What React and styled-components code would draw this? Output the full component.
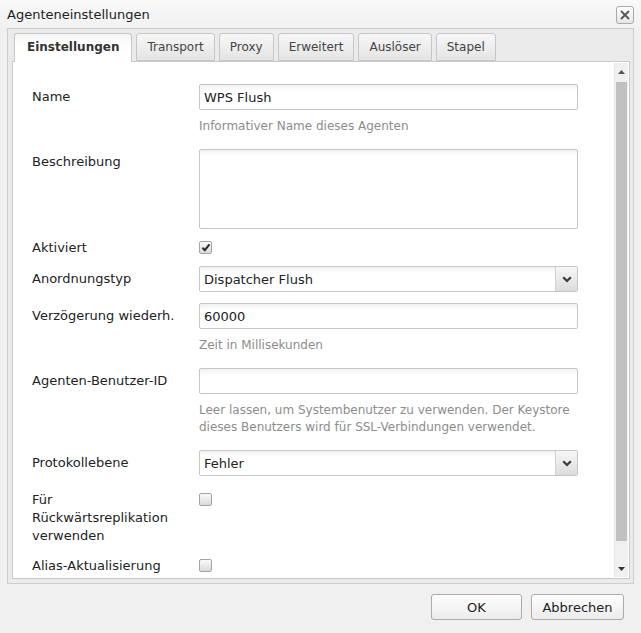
import React from "react";
import styled, { createGlobalStyle } from "styled-components";

const Global = createGlobalStyle`
  html, body { margin: 0; padding: 0; background: #f0f0f0; }
  body { font-family: "DejaVu Sans", Verdana, sans-serif; color: #222; }
  * { box-sizing: border-box; }
`;

const Dialog = styled.div`
  width: 641px;
  height: 633px;
  display: flex;
  flex-direction: column;
  background: #f0f0f0;
  overflow: hidden;
`;

const TitleBar = styled.div`
  height: 28px;
  flex: none;
  display: flex;
  align-items: center;
  justify-content: space-between;
  padding: 0 7px 0 7px;
  background: linear-gradient(#f9f9f9, #f1f1f1);
  font-size: 13px;
  color: #222;
`;

const CloseButton = styled.div`
  width: 18px;
  height: 18px;
  margin-top: 1px;
  border: 1px solid #a9a9a9;
  border-radius: 3px;
  background: linear-gradient(#ffffff, #e6e6e6);
  display: flex;
  align-items: center;
  justify-content: center;
`;

const Frame = styled.div`
  flex: none;
  height: 556px;
  margin: 0 7px;
  display: flex;
  flex-direction: column;
  border: 1px solid #cdcdcd;
  background: #ebebeb;
  padding: 0 3px 4px 4px;
`;

const TabStrip = styled.div`
  height: 32px;
  flex: none;
  display: flex;
  align-items: flex-end;
  gap: 4px;
  padding-left: 2px;
  position: relative;
  z-index: 1;
`;

const Tab = styled.div`
  height: ${(p) => (p.$active ? "29px" : "28px")};
  margin-bottom: ${(p) => (p.$active ? "-1px" : "0")};
  padding: 0 ${(p) => (p.$active ? "12px" : "10px")};
  display: flex;
  align-items: center;
  font-size: 12px;
  font-weight: ${(p) => (p.$active ? "bold" : "normal")};
  color: ${(p) => (p.$active ? "#333" : "#444")};
  border: 1px solid #c6c6c6;
  border-bottom: ${(p) => (p.$active ? "none" : "1px solid #c6c6c6")};
  border-radius: 3px 3px 0 0;
  background: ${(p) =>
    p.$active
      ? "linear-gradient(#f4f4f4, #ffffff 40%)"
      : "linear-gradient(#f7f7f7, #e4e4e4)"};
  padding-bottom: ${(p) => (p.$active ? "2px" : "0")};
`;

const ContentBox = styled.div`
  flex: 1;
  min-height: 0;
  display: flex;
  background: #fff;
  border: 1px solid #c9c9c9;
`;

const Form = styled.div`
  flex: 1;
  min-width: 0;
  padding: 22px 0 0 19px;
  overflow: hidden;
`;

const Row = styled.div`
  display: grid;
  grid-template-columns: 167px 379px;
  margin-top: ${(p) => p.$mt || 0}px;
`;

const Label = styled.div`
  width: 160px;
  padding-top: 4px;
  font-size: 13px;
  line-height: 18px;
  color: #222;
`;

const Field = styled.div`
  display: flex;
  flex-direction: column;
`;

const TextInput = styled.input`
  width: 379px;
  height: 26px;
  margin: 0;
  padding: 0 4px;
  font-family: "DejaVu Sans", Verdana, sans-serif;
  font-size: 13px;
  color: #222;
  border: 1px solid #c6c6c6;
  border-radius: 2px;
  background: linear-gradient(#f1f1f1, #ffffff 6px);
  outline: none;
`;

const TextArea = styled.textarea`
  width: 379px;
  height: 80px;
  margin: 0;
  padding: 3px 4px;
  display: block;
  resize: none;
  font-family: "DejaVu Sans", Verdana, sans-serif;
  font-size: 13px;
  border: 1px solid #c6c6c6;
  border-radius: 2px;
  background: linear-gradient(#f1f1f1, #ffffff 6px);
  outline: none;
`;

const Hint = styled.div`
  margin-top: 8px;
  font-size: 12px;
  line-height: 17px;
  color: #8c8c8c;
`;

const SelectBox = styled.div`
  width: 379px;
  height: 26px;
  display: flex;
  border: 1px solid #c6c6c6;
  border-radius: 2px;
  background: linear-gradient(#f1f1f1, #ffffff 6px);
  overflow: hidden;
`;

const SelectValue = styled.div`
  flex: 1;
  display: flex;
  align-items: center;
  padding: 0 4px;
  font-size: 13px;
  color: #222;
`;

const DropButton = styled.div`
  width: 22px;
  flex: none;
  display: flex;
  align-items: center;
  justify-content: center;
  border-left: 1px solid #d0d0d0;
  background: linear-gradient(#f7f7f7, #dcdcdc);
`;

const CheckBox = styled.div`
  width: 13px;
  height: 13px;
  margin-top: 6px;
  border: 1px solid #a4a4a4;
  border-radius: 2px;
  background: linear-gradient(#fafafa, #dadada);
  display: flex;
  align-items: center;
  justify-content: center;
`;

const ScrollBar = styled.div`
  width: 14px;
  flex: none;
  margin: 1px 1px 1px 0;
  display: flex;
  flex-direction: column;
  background: #f0f0f0;
  border-left: 1px solid #e6e6e6;
`;

const ScrollArrow = styled.div`
  height: 18px;
  flex: none;
  display: flex;
  align-items: center;
  justify-content: center;
`;

const ScrollTrack = styled.div`
  flex: 1;
  display: flex;
  flex-direction: column;
  padding: 1px 1px 19px 1px;
`;

const Thumb = styled.div`
  height: 459px;
  background: #c1c1c1;
`;

const Footer = styled.div`
  flex: 1;
  display: flex;
  justify-content: flex-end;
  align-items: flex-start;
  gap: 9px;
  padding: 10px 17px 0 0;
`;

const Button = styled.div`
  width: ${(p) => p.$w}px;
  height: 26px;
  display: flex;
  align-items: center;
  justify-content: center;
  font-size: 13px;
  color: #222;
  border: 1px solid #ababab;
  border-radius: 3px;
  background: linear-gradient(#ffffff, #ebebeb);
`;

const Chevron = () => (
  <svg width="10" height="7" viewBox="0 0 10 7">
    <path d="M1.2 1.2 L5 5 L8.8 1.2" fill="none" stroke="#3a3a3a" strokeWidth="2.2" />
  </svg>
);

const Check = () => (
  <svg width="10" height="9" viewBox="0 0 10 9">
    <path d="M1.5 4.8 L3.8 7.2 L8.5 1.3" fill="none" stroke="#2a2a2a" strokeWidth="2" />
  </svg>
);

const Select = ({ value }) => (
  <SelectBox>
    <SelectValue>{value}</SelectValue>
    <DropButton>
      <Chevron />
    </DropButton>
  </SelectBox>
);

const tabs = ["Einstellungen", "Transport", "Proxy", "Erweitert", "Auslöser", "Stapel"];

export default function App() {
  return (
    <>
      <Global />
      <Dialog>
        <TitleBar>
          <span>Agenteneinstellungen</span>
          <CloseButton>
            <svg width="12" height="12" viewBox="0 0 12 12">
              <path d="M2 2 L10 10 M10 2 L2 10" stroke="#555" strokeWidth="1.8" />
            </svg>
          </CloseButton>
        </TitleBar>
        <Frame>
          <TabStrip>
            {tabs.map((t, i) => (
              <Tab key={t} $active={i === 0}>
                {t}
              </Tab>
            ))}
          </TabStrip>
          <ContentBox>
            <Form>
              <Row>
                <Label>Name</Label>
                <Field>
                  <TextInput readOnly value="WPS Flush" />
                  <Hint>Informativer Name dieses Agenten</Hint>
                </Field>
              </Row>
              <Row $mt={14}>
                <Label>Beschreibung</Label>
                <Field>
                  <TextArea readOnly value="" />
                </Field>
              </Row>
              <Row $mt={6}>
                <Label>Aktiviert</Label>
                <Field>
                  <CheckBox>
                    <Check />
                  </CheckBox>
                </Field>
              </Row>
              <Row $mt={9}>
                <Label>Anordnungstyp</Label>
                <Field>
                  <Select value="Dispatcher Flush" />
                </Field>
              </Row>
              <Row $mt={11}>
                <Label>Verzögerung wiederh.</Label>
                <Field>
                  <TextInput readOnly value="60000" />
                  <Hint>Zeit in Millisekunden</Hint>
                </Field>
              </Row>
              <Row $mt={14}>
                <Label>Agenten-Benutzer-ID</Label>
                <Field>
                  <TextInput readOnly value="" />
                  <Hint>
                    Leer lassen, um Systembenutzer zu verwenden. Der Keystore dieses Benutzers wird für SSL-Verbindungen verwendet.
                  </Hint>
                </Field>
              </Row>
              <Row $mt={14}>
                <Label>Protokollebene</Label>
                <Field>
                  <Select value="Fehler" />
                </Field>
              </Row>
              <Row $mt={11}>
                <Label>Für Rückwärtsreplikation verwenden</Label>
                <Field>
                  <CheckBox />
                </Field>
              </Row>
              <Row $mt={8}>
                <Label>Alias-Aktualisierung</Label>
                <Field>
                  <CheckBox />
                </Field>
              </Row>
            </Form>
            <ScrollBar>
              <ScrollArrow>
                <svg width="7" height="4" viewBox="0 0 7 4">
                  <path d="M0 4 L3.5 0 L7 4 Z" fill="#555" />
                </svg>
              </ScrollArrow>
              <ScrollTrack>
                <Thumb />
              </ScrollTrack>
              <ScrollArrow>
                <svg width="7" height="4" viewBox="0 0 7 4">
                  <path d="M0 0 L3.5 4 L7 0 Z" fill="#333" />
                </svg>
              </ScrollArrow>
            </ScrollBar>
          </ContentBox>
        </Frame>
        <Footer>
          <Button $w={91}>OK</Button>
          <Button $w={93}>Abbrechen</Button>
        </Footer>
      </Dialog>
    </>
  );
}
